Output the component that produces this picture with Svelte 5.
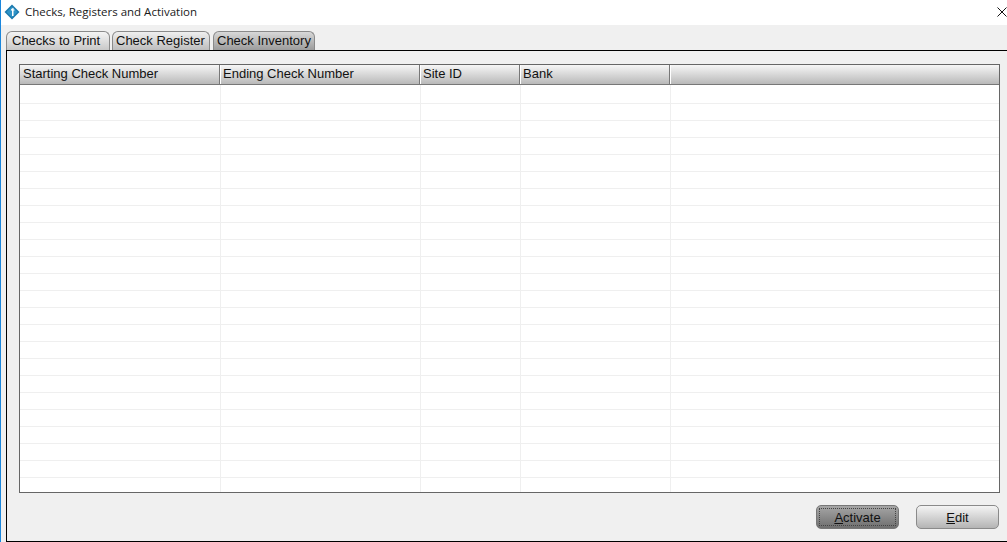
<script>
  const columns = [
    { label: 'Starting Check Number', width: 201 },
    { label: 'Ending Check Number', width: 200 },
    { label: 'Site ID', width: 100 },
    { label: 'Bank', width: 150 },
    { label: '', width: 328 }
  ];
  const rows = Array.from({ length: 24 }, (_, i) => i);
</script>

<div class="window">
  <header class="titlebar">
    <svg class="logo" width="16" height="16" viewBox="0 0 16 16" aria-hidden="true">
      <path d="M8 .5 15.5 8 8 15.5 .5 8Z" fill="#1b78ad" />
      <path d="M8 2.500 13.500 8 8 13.500 2.500 8Z" fill="#2f93c7" />
      <path d="M9.500 3.800C8 4.300 7 5.200 6.800 6.600H8V12H9.500V6.600H10.500V5.400H9.500Z" fill="#fff" />
    </svg>
    <span class="title">Checks, Registers and Activation</span>
    <svg class="close" width="10" height="10" viewBox="0 0 10 10" aria-hidden="true">
      <path d="M.5.5l9 9M9.500.5l-9 9" stroke="#111" stroke-width="1" fill="none" />
    </svg>
  </header>

  <div class="body">
    <nav class="tabs">
      <div class="tab first">Checks to Print</div>
      <div class="tab second">Check Register</div>
      <div class="tab third">Check Inventory</div>
    </nav>

    <section class="panel">
      <div class="table">
        <div class="head">
          {#each columns as c}
            <div class="th" style="width:{c.width}px">{c.label}</div>
          {/each}
        </div>
        <div class="rows">
          {#each rows as r}
            <div class="row">
              {#each columns as c}
                <div class="td" style="width:{c.width}px"></div>
              {/each}
            </div>
          {/each}
        </div>
      </div>

      <div class="actions">
        <button class="btn active"><span class="focus"><u>A</u>ctivate</span></button>
        <button class="btn"><span class="focus plain"><u>E</u>dit</span></button>
      </div>
    </section>
  </div>
</div>

<style>
  :global(body) {
    margin: 0;
    background: #f0f0f0;
  }
  .window {
    width: 1007px;
    height: 542px;
    box-sizing: border-box;
    border-left: 1px solid #1a86dc;
    display: flex;
    flex-direction: column;
    overflow: hidden;
    font-family: "Liberation Sans", Arial, sans-serif;
    color: #111;
  }
  .titlebar {
    height: 25px;
    flex: none;
    background: #fff;
    display: flex;
    align-items: center;
    padding: 0 0 2px 3px;
    gap: 5px;
    box-sizing: border-box;
  }
  .title {
    font-family: "Open Sans", sans-serif;
    font-size: 11.500px;
    flex: 1;
    color: #1a1a1a;
  }
  .body {
    flex: 1;
    display: flex;
    flex-direction: column;
    padding-left: 5px;
    min-height: 0;
    background: #f0f0f0;
  }
  .tabs {
    height: 25px;
    flex: none;
    display: flex;
    align-items: flex-end;
    gap: 2px;
    box-sizing: border-box;
  }
  .tab {
    height: 19px;
    box-sizing: border-box;
    border: 1px solid #8a8a8a;
    border-bottom: 0;
    border-radius: 6px 6px 0 0;
    font-size: 13px;
    line-height: 18px;
    padding: 0 3px;
    white-space: nowrap;
  }
  .first {
    width: 104px;
    padding-left: 5px;
    background: linear-gradient(#f4f4f4, #c8c8c8);
  }
  .second {
    width: 98px;
    background: linear-gradient(#efefef, #bdbdbd);
  }
  .third {
    width: 102px;
    margin-left: 1px;
    background: linear-gradient(#d8d8d8, #9c9c9c);
  }
  .panel {
    flex: 1;
    min-height: 0;
    box-sizing: border-box;
    border-top: 1px solid #000;
    border-left: 1px solid #000;
    border-bottom: 1px solid #000;
    padding: 13px 8px 11px 12px;
    display: flex;
    flex-direction: column;
  }
  .table {
    width: 981px;
    height: 429px;
    box-sizing: border-box;
    border: 1px solid #666;
    background: #fff;
    flex: none;
    overflow: hidden;
  }
  .head {
    display: flex;
    height: 20px;
    box-sizing: border-box;
    border-bottom: 1px solid #777;
  }
  .th {
    flex: none;
    box-sizing: border-box;
    height: 19px;
    background: linear-gradient(#f6f6f6, #b9b9b9);
    border-right: 1px solid #fff;
    font-size: 13px;
    line-height: 18px;
    padding-left: 2px;
    white-space: nowrap;
    box-shadow: inset -1px 0 0 #777;
  }
  .th:first-child {
    padding-left: 3px;
  }
  .th:last-child {
    border-right: 0;
    box-shadow: none;
  }
  .rows {
    display: flex;
    flex-direction: column;
  }
  .row {
    display: flex;
    height: 17px;
    flex: none;
    box-sizing: border-box;
    border-bottom: 1px solid #efefef;
  }
  .row:first-child {
    height: 19px;
  }
  .td {
    flex: none;
    box-sizing: border-box;
    border-right: 1px solid #efefef;
  }
  .td:last-child {
    border-right: 0;
  }
  .actions {
    display: flex;
    justify-content: flex-end;
    gap: 17px;
    margin-top: 12px;
  }
  .btn {
    width: 83px;
    height: 24px;
    box-sizing: border-box;
    border: 1px solid #8a8a8a;
    border-radius: 5px;
    padding: 2px;
    background: linear-gradient(#f4f4f4, #b4b4b4);
    font-family: "Liberation Sans", Arial, sans-serif;
    font-size: 13px;
    color: #111;
    display: flex;
  }
  .btn.active {
    background: linear-gradient(#a6a6a6, #6f6f6f);
    border-color: #777;
  }
  .focus {
    flex: 1;
    border: 1px dotted #444;
    display: flex;
    align-items: center;
    justify-content: center;
    white-space: pre;
  }
  .focus.plain {
    border-color: transparent;
  }
</style>
